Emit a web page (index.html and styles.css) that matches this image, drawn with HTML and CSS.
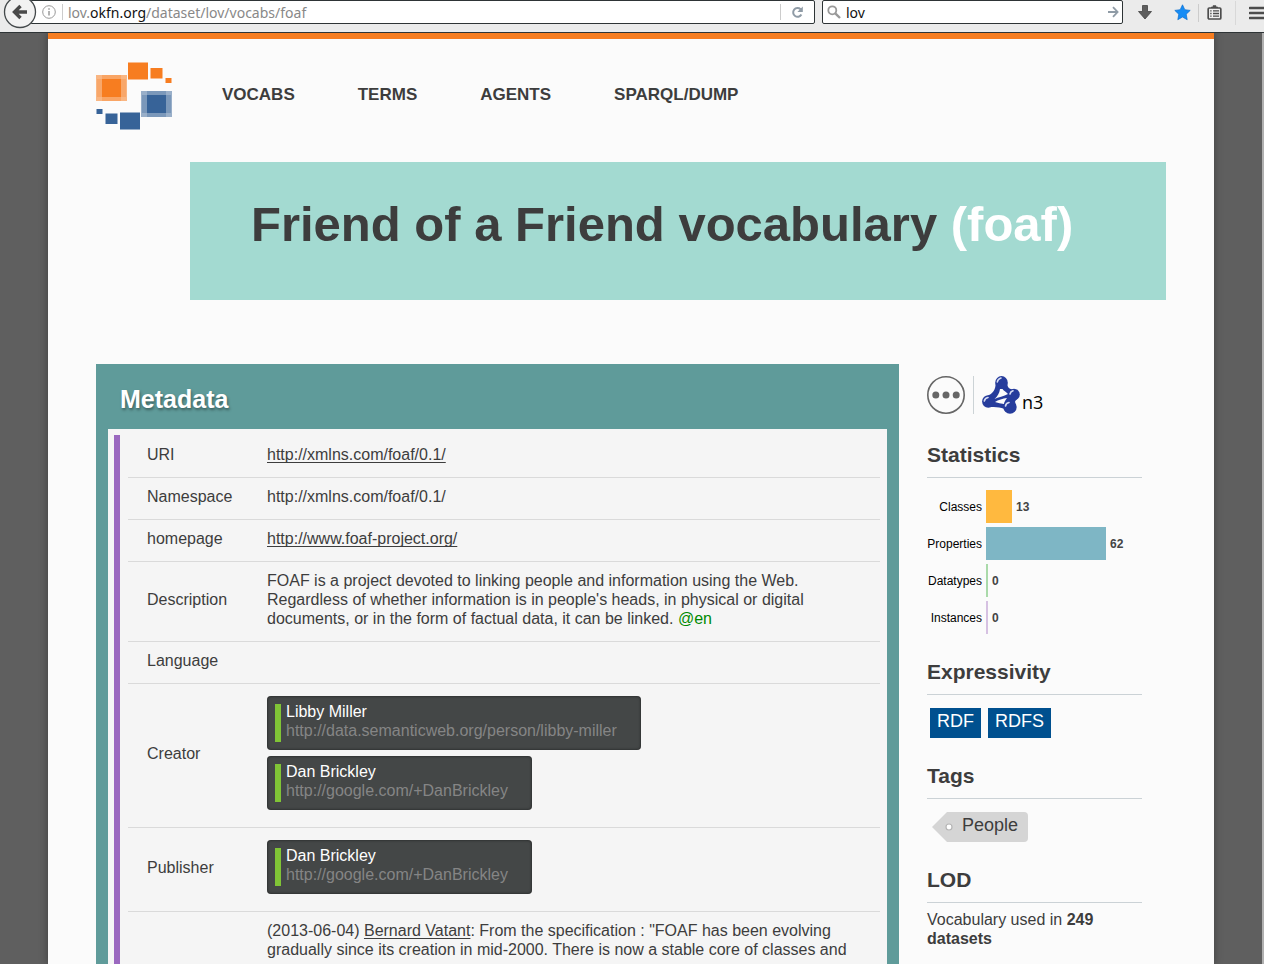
FILE: index.html
```
<!DOCTYPE html>
<html lang="en">
<head>
<meta charset="utf-8">
<title>Friend of a Friend vocabulary (foaf)</title>
<link rel="stylesheet" href="styles.css">
</head>
<body>
<div class="browser">
  <div class="toolbar">
    <button class="back" aria-label="Back">
      <svg width="34" height="34" viewBox="0 0 34 34"><circle cx="17" cy="17" r="15.5" fill="#f2f2f2" stroke="#44494b" stroke-width="1.3"/><path d="M17.5 11 L11.5 17 L17.5 23 M12 17 H24" fill="none" stroke="#4a4a4a" stroke-width="3.4"/></svg>
    </button>
    <div class="urlbar">
      <svg class="info" width="14" height="14" viewBox="0 0 14 14"><circle cx="7" cy="7" r="6.3" fill="none" stroke="#999" stroke-width="1"/><path d="M7 6V10.5M7 3.3V4.8" stroke="#999" stroke-width="1.5"/></svg>
      <span class="divider"></span>
      <div class="url" role="textbox" aria-label="Address" contenteditable="true" spellcheck="false">lov.<span class="domain">okfn.org</span>/dataset/lov/vocabs/foaf</div>
      <span class="divider"></span>
      <button class="reload" aria-label="Reload"><svg width="13" height="13" viewBox="0 0 13 13"><path d="M9.6 3.2A4.4 4.4 0 1 0 10.4 8.6" fill="none" stroke="#8f9ba6" stroke-width="2"/><path d="M11.8 .6V6H6.4Z" fill="#8f9ba6"/></svg></button>
    </div>
    <div class="search">
      <svg width="14" height="14" viewBox="0 0 14 14"><circle cx="5.3" cy="5.3" r="4" fill="none" stroke="#999" stroke-width="1.8"/><path d="M8.3 8.3L13 13" stroke="#999" stroke-width="2.4"/></svg>
      <input class="search-input" type="text" value="lov" aria-label="Search">
      <button class="go" aria-label="Go"><svg width="11" height="12" viewBox="0 0 11 12"><path d="M0 6H9M5 1.2L9.6 6L5 10.8" fill="none" stroke="#8f9ba6" stroke-width="1.8"/></svg></button>
    </div>
    <div class="tools">
      <button class="download" aria-label="Downloads"><svg width="14" height="15" viewBox="0 0 14 15"><path d="M4.5 .5H9.500V6.500H13.500L7 14L.5 6.500H4.500Z" fill="#5e5e5e" stroke="#444" stroke-width=".8"/></svg></button>
      <button class="star" aria-label="Bookmark"><svg width="17" height="17" viewBox="0 0 17 17"><path d="M8.500 .8L10.800 5.700L16.200 6.400L12.200 10.200L13.200 15.700L8.500 13L3.800 15.700L4.800 10.200L.8 6.400L6.200 5.700Z" fill="#158cf5" stroke="#0b6fd0" stroke-width=".7"/></svg></button>
      <span class="tool-divider"></span>
      <button class="clip" aria-label="Bookmarks list"><svg width="15" height="15" viewBox="0 0 15 15"><path d="M4 3V1.800H5.500L6 .3H9L9.500 1.800H11V3Z" fill="#4c4c4c"/><rect x="1.200" y="3" width="12.600" height="11" rx="1" fill="#f1f1f1" stroke="#4c4c4c" stroke-width="1.700"/><path d="M3.200 5.800H4.600M6 5.800H12M3.200 8.500H4.600M6 8.500H12M3.200 11.200H4.600M6 11.200H12" stroke="#4c4c4c" stroke-width="1.300"/></svg></button>
      <span class="tool-divider tall"></span>
      <button class="menu" aria-label="Menu"><svg width="18" height="14" viewBox="0 0 18 14"><path d="M1 2H17M1 7H17M1 12H17" stroke="#4c4c4c" stroke-width="2.600" stroke-linecap="round"/></svg></button>
    </div>
  </div>
  <div class="viewport">
    <div class="page">
      <header class="header">
        <a href="#" class="logo" aria-label="Linked Open Vocabularies">
          <svg width="76" height="68" viewBox="0 0 76 68">
            <g fill="#f77d20"><rect y="13" width="31" height="26" opacity=".55"/><rect x="1" y="17" width="29" height="18" opacity=".25"/><rect x="6" y="13" width="19" height="26" opacity=".3"/><rect x="6" y="17" width="19" height="18"/><rect x="32" y="0.500" width="20" height="17"/><rect x="54.500" y="6" width="12" height="10.500"/><rect x="69.500" y="16" width="6" height="5"/></g>
            <g fill="#376398"><rect x="45" y="29" width="31" height="26" opacity=".5"/><rect x="46" y="33" width="29" height="18" opacity=".3"/><rect x="51" y="29" width="19" height="26" opacity=".3"/><rect x="51" y="33" width="19" height="18"/><rect x="24" y="50.500" width="20" height="17"/><rect x="9.500" y="51.500" width="12" height="10.500"/><rect x="0.500" y="47" width="6" height="5"/></g>
          </svg>
        </a>
        <nav class="nav">
          <a href="#">VOCABS</a><a href="#">TERMS</a><a href="#">AGENTS</a><a href="#">SPARQL/DUMP</a>
        </nav>
      </header>
      <div class="banner"><h1>Friend of a Friend vocabulary <span class="prefix">(foaf)</span></h1></div>
      <div class="columns">
        <main class="metadata">
          <h2>Metadata</h2>
          <div class="sheet">
            <div class="stripe">
              <table class="facts">
                <tr><th scope="row">URI</th><td><a href="#">http://xmlns.com/foaf/0.1/</a></td></tr>
                <tr><th scope="row">Namespace</th><td>http://xmlns.com/foaf/0.1/</td></tr>
                <tr><th scope="row">homepage</th><td><a href="#">http://www.foaf-project.org/</a></td></tr>
                <tr><th scope="row">Description</th><td>FOAF is a project devoted to linking people and information using the Web. Regardless of whether information is in people's heads, in physical or digital documents, or in the form of factual data, it can be linked. <span class="lang">@en</span></td></tr>
                <tr><th scope="row">Language</th><td></td></tr>
                <tr class="people"><th scope="row">Creator</th><td>
                  <a class="agent" href="#"><span class="agent-body"><span class="name">Libby Miller</span><span class="uri">http://data.semanticweb.org/person/libby-miller</span></span></a>
                  <a class="agent" href="#"><span class="agent-body"><span class="name">Dan Brickley</span><span class="uri">http://google.com/+DanBrickley</span></span></a>
                </td></tr>
                <tr class="people"><th scope="row">Publisher</th><td>
                  <a class="agent" href="#"><span class="agent-body"><span class="name">Dan Brickley</span><span class="uri">http://google.com/+DanBrickley</span></span></a>
                </td></tr>
                <tr><th></th><td>(2013-06-04) <a href="#">Bernard Vatant</a>: From the specification : "FOAF has been evolving gradually since its creation in mid-2000. There is now a stable core of classes and</td></tr>
              </table>
            </div>
          </div>
        </main>
        <aside class="sidebar">
          <div class="formats">
            <button class="more" aria-label="More"><svg width="38" height="38" viewBox="0 0 38 38"><circle cx="19" cy="19" r="18.200" fill="none" stroke="#666" stroke-width="1.600"/><g fill="#666"><circle cx="8.800" cy="19" r="3.500"/><circle cx="19" cy="19" r="3.500"/><circle cx="29.200" cy="19" r="3.500"/></g></svg></button>
            <a href="#" class="n3"><svg width="38" height="38" viewBox="0 0 38 38">
              <path fill="#263c9c" fill-rule="evenodd" d="M13.500 7H25.500C25 11 27 13 32 14L36 22C33 24 32 27 33 31L26 35C21 31 14 31 6 31L5 20C11 18 14 13 13.500 7ZM18 13C17.500 17 15.500 20.500 12.500 23C16 21.500 22 20 26 18C24 15.500 21.500 15 20.500 13ZM25 22C21 22.500 16 24 13 26C16 27 19 27.500 22 28C22.500 25.500 23.500 24 25 22Z"/>
              <g fill="#263c9c"><circle cx="19.500" cy="6.300" r="6.200"/><circle cx="6.300" cy="25.500" r="6.200"/><circle cx="32" cy="18.500" r="5.800"/><circle cx="28" cy="31" r="6.700"/></g>
              <g fill="none" stroke="#d5dbf2" stroke-width="1.600" stroke-linecap="round"><path d="M15.300 6Q15.800 2.800 19 2M2.300 25Q3 22 6 21.500M28 18Q28.500 15.500 31 14.800M23.500 30Q24 27 27 26.500"/></g>
            </svg><span>n3</span></a>
          </div>
          <h3>Statistics</h3>
          <div class="chart">
            <span class="label">Classes</span><span class="bar-row"><span class="bar classes" style="width:26px"></span><b>13</b></span>
            <span class="label">Properties</span><span class="bar-row"><span class="bar properties" style="width:120px"></span><b>62</b></span>
            <span class="label">Datatypes</span><span class="bar-row"><span class="bar datatypes" style="width:2px"></span><b>0</b></span>
            <span class="label">Instances</span><span class="bar-row"><span class="bar instances" style="width:2px"></span><b>0</b></span>
          </div>
          <h3>Expressivity</h3>
          <div class="chips"><span class="chip">RDF</span><span class="chip">RDFS</span></div>
          <h3>Tags</h3>
          <div class="tags"><a href="#" class="tag"><svg width="25" height="30" viewBox="0 0 25 30"><path d="M0 15L15 0H25V30H15Z" fill="#d5d5d5"/><circle cx="17" cy="15" r="3" fill="#fff" stroke="#b5b5b5" stroke-width="1.200"/></svg><span class="tag-name">People</span></a></div>
          <h3>LOD</h3>
          <p class="lod">Vocabulary used in <b>249 datasets</b></p>
        </aside>
      </div>
    </div>
  </div>
</div>
</body>
</html>
```
FILE: styles.css
```
* { box-sizing: border-box; }
body { margin: 0; font: 16px/19px "Liberation Sans", Arial, sans-serif; color: #3d3d3d; }
button { padding: 0; border: 0; background: none; display: flex; cursor: pointer; }
svg { display: block; flex: none; }
a { color: inherit; text-decoration: none; }
.browser { height: 100vh; overflow: hidden; display: flex; flex-direction: column; }

.toolbar { height: 33px; flex: none; display: flex; align-items: flex-start; padding-left: 3px; background: #ebebeb; border-bottom: 1px solid #2e3436; font-family: "Noto Sans", sans-serif; font-size: 14px; }
.back { margin-top: -5px; position: relative; z-index: 1; }
.urlbar, .search { height: 24px; display: flex; align-items: center; background: #fff; border: 1px solid #2e3436; border-radius: 2px; }
.urlbar { flex: 1; margin-left: -7px; padding-left: 11px; }
.info { margin-right: 6px; }
.divider { width: 1px; height: 16px; background: #ccc; }
.url { flex: 1; padding-left: 5px; color: #888; white-space: nowrap; outline: 0; }
.domain { color: #111; }
.reload { margin: 0 10px; }
.search { width: 301px; margin-left: 7px; padding: 0 3px 0 4px; }
.search-input { flex: 1; min-width: 0; border: 0; padding: 0 5px; background: none; font: inherit; color: #111; outline: 0; }
.tools { display: flex; align-items: center; height: 25px; width: 141px; padding-left: 15px; }
.star { margin-left: 22px; }
.tool-divider { width: 1px; height: 18px; margin: 0 8px 0 7px; background: #ccc; flex: none; }
.tool-divider.tall { margin: 0 13px; height: 24px; background: #d8d8d8; }

.viewport { flex: 1; min-height: 0; overflow: hidden; display: flex; padding: 0 48px; background: #5f5f5f; border-right: 2px solid #b0b0b0; }
.page { flex: 1; min-width: 0; padding: 0 48px; background: #fbfbfb; border-top: 6px solid #f77d20; box-shadow: 0 0 8px rgba(0, 0, 0, .35); }
.header { display: flex; align-items: flex-start; padding-top: 23px; height: 123px; }
.nav { display: flex; gap: 63px; padding: 23px 0 0 50px; font-size: 17px; font-weight: bold; }
.banner { height: 138px; margin-left: 94px; padding: 32px 0 0 61px; background: #a3dad1; }
h1 { margin: 0; font-size: 49px; line-height: 60px; white-space: nowrap; }
.prefix { color: #fff; }
.columns { display: flex; align-items: flex-start; gap: 28px; margin-top: 64px; padding-right: 24px; }

.metadata { flex: 1; min-width: 0; padding: 0 12px 12px; background: #5f9b9a; }
h2 { margin: 0; padding: 20px 12px 15px; font-size: 25px; line-height: 30px; color: #fff; text-shadow: 1px 2px 3px rgba(0, 0, 0, .4); }
.sheet { padding: 6px; background: #f5f5f5; }
.stripe { border-left: 6px solid #9a68bf; padding: 1px 1px 0 8px; }
.facts { width: 100%; border-spacing: 0; }
.facts th { width: 139px; padding: 9px 0 13px 19px; font-weight: normal; text-align: left; }
.facts td { padding: 9px 19px 13px 0; }
.facts th, .facts td { border-bottom: 1px solid #dadada; }
.facts td > a:not(.agent) { text-decoration: underline 1px; text-underline-offset: 2px; text-decoration-skip-ink: none; }
.lang { color: #008a00; }
.facts .people td { padding: 12px 0 11px; }
.agent { display: block; width: fit-content; margin-bottom: 6px; padding: 6px 24px 10px 8px; background: #444747; border-radius: 4px; box-shadow: inset 0 0 3px rgba(0, 0, 0, .6); }
.agent-body { display: grid; grid-template-columns: 6px auto; column-gap: 5px; }
.agent-body::before { content: ""; grid-row: 1 / 3; margin: 2px 0 -2px; background: #80c436; }
.name, .uri { grid-column: 2; }
.name { color: #fff; }
.uri { color: #858585; }

.sidebar { width: 215px; flex: none; padding-top: 12px; }
.formats { display: flex; height: 41px; }
.n3 { display: flex; align-items: flex-end; height: 38px; margin-left: 8px; padding-left: 8px; border-left: 1px solid #ccd3d6; color: #000; font: 500 18px/24px "Open Sans", sans-serif; }
.n3 span { margin-left: 2px; }
h3 { margin: 25px 0 0; padding-bottom: 9px; border-bottom: 1px solid #cbd2d6; font-size: 21px; line-height: 26px; }
.chart { display: grid; grid-template-columns: 55px 1fr; grid-auto-rows: 33px; gap: 4px; padding-top: 12px; font-size: 12px; line-height: 34px; color: #000; }
.label { justify-self: end; }
.bar-row { display: flex; gap: 4px; }
.bar-row b { color: #444; }
.classes { background: #ffb93f; }
.properties { background: #7eb6c5; }
.datatypes { background: #aadaaa; }
.instances { background: #d6c1e2; }
.chips { display: flex; gap: 7px; padding: 13px 0 0 3px; }
.chip { padding: 0 7px; height: 30px; background: #00508f; color: #fff; font-size: 18px; line-height: 27px; }
.tags { display: flex; padding: 13px 0 0 5px; }
.tag { display: flex; font-size: 18px; line-height: 27px; }
.tag-name { height: 30px; padding: 0 10px 0 5px; background: #d5d5d5; border-radius: 0 4px 4px 0; }
.lod { margin: 0; padding-top: 7px; }
```
